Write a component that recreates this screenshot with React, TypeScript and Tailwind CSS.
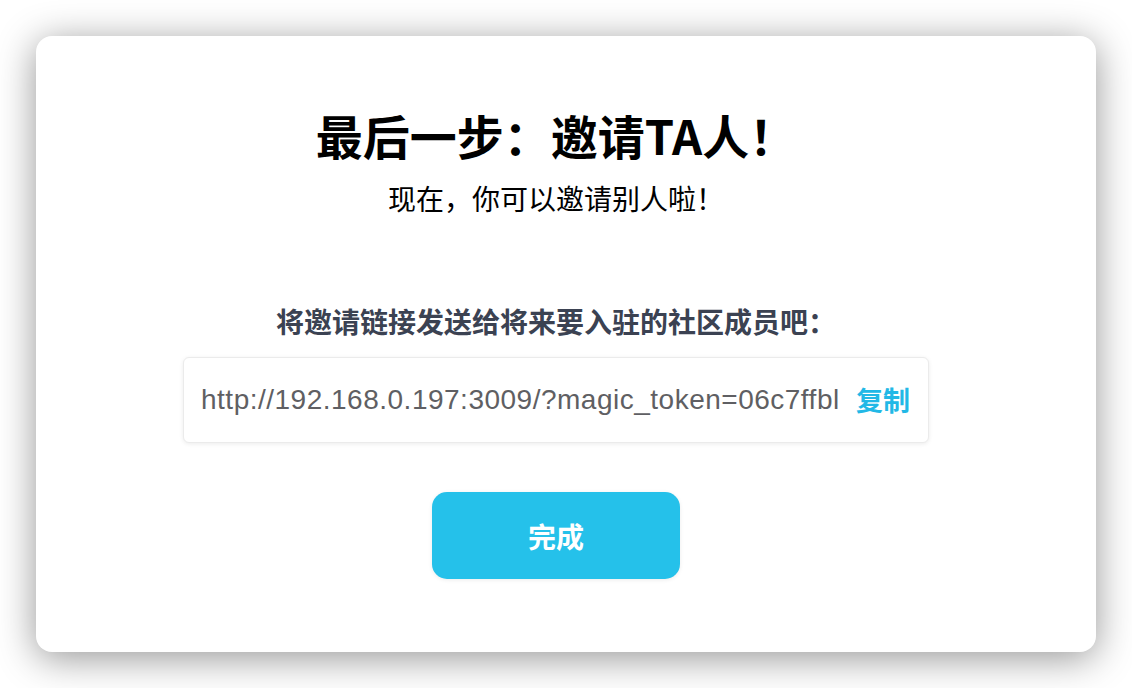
import { useState } from 'react'

const INVITE_URL = 'http://192.168.0.197:3009/?magic_token=06c7ffbl2a9e4d61b3f0c85e7a1d924f'

const cjk = '"Noto Sans CJK SC", "Noto Sans", sans-serif'

export default function App() {
  const [copied, setCopied] = useState(false)

  return (
    <div className="w-[1132px] h-[688px] bg-white p-[36px]" style={{ fontFamily: cjk }}>
      <div className="w-[1060px] h-[616px] bg-white rounded-[16px] shadow-[0_6px_38px_rgba(0,0,0,0.42)] flex flex-col items-center pt-[72px] pr-[20px]">
        <h1 className="text-[47px] leading-[54px] font-bold text-black">最后一步：邀请TA人！</h1>
        <p className="mt-[18px] text-[28px] leading-[36px] text-black">现在，你可以邀请别人啦！</p>

        <p className="mt-[87px] text-[28px] leading-[36px] font-semibold text-[#3b4252]">
          将邀请链接发送给将来要入驻的社区成员吧：
        </p>

        {/* invite link box */}
        <div className="mt-[18px] w-[746px] h-[86px] flex items-center gap-[16px] pl-[17px] pr-[18px] bg-white border border-[#ebebeb] rounded-[6px] shadow-[0_1px_4px_rgba(0,0,0,0.08)]">
          <input
            readOnly
            value={INVITE_URL}
            className="flex-1 min-w-0 bg-transparent outline-none text-[28px] tracking-[0.5px] text-[#5f5f63]"
            style={{ fontFamily: '"Liberation Sans", Arial, sans-serif' }}
          />
          <button
            className="shrink-0 text-[27px] font-bold text-[#22b8e6]"
            onClick={() => setCopied(!copied)}
          >
            复制
          </button>
        </div>

        <button className="mt-[49px] w-[248px] h-[87px] rounded-[15px] bg-[#25c1ea] text-white text-[28px] font-bold shadow-[0_1px_4px_rgba(0,0,0,0.08)]">
          完成
        </button>
      </div>
    </div>
  )
}
